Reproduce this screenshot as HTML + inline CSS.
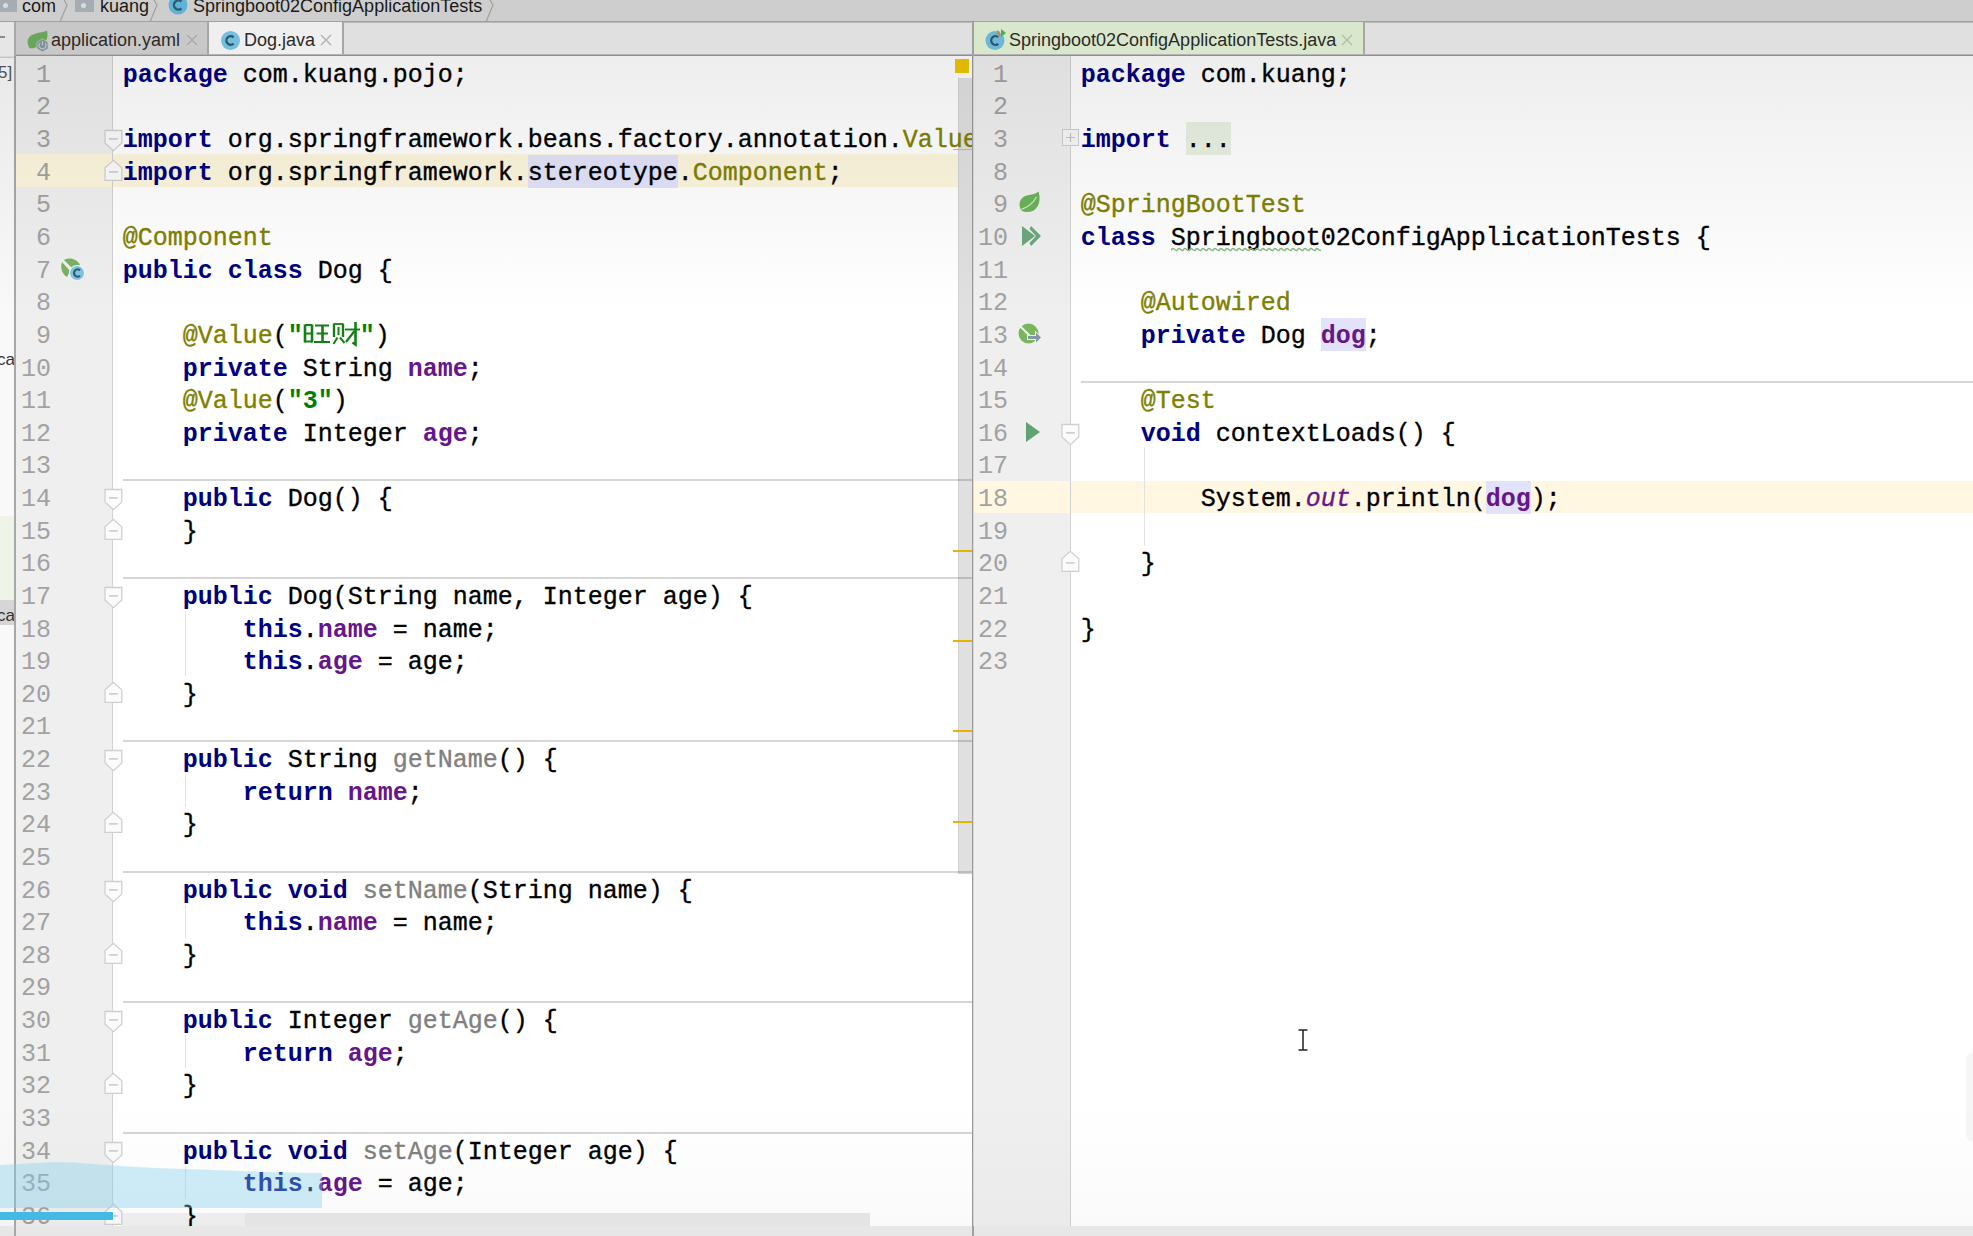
<!DOCTYPE html><html><head><meta charset="utf-8"><style>
*{margin:0;padding:0;box-sizing:border-box}
html,body{width:1973px;height:1236px;overflow:hidden;background:#fff}
body{position:relative;font-family:"Liberation Sans",sans-serif}
.abs{position:absolute}
.clip{position:absolute;overflow:hidden}
.code{position:absolute;white-space:pre;font-family:"Liberation Mono",monospace;font-size:25px;line-height:32.63px;color:#000;-webkit-text-stroke:0.35px currentColor}
.k{color:#000080;font-weight:bold;-webkit-text-stroke:0}
.a{color:#808000}
.f{color:#66168a;font-weight:bold;-webkit-text-stroke:0}
.s{color:#008000;font-weight:bold;-webkit-text-stroke:0}
.g{color:#808080}
.n{color:#000}
.i{color:#66168a;font-style:italic}
.hl{background:#e2e2fa;padding:4px 0 0}
.dots{background:#e9f1e3;padding:4px 0 0}
.ln{position:absolute;white-space:pre;font-family:"Liberation Mono",monospace;font-size:25px;line-height:32.63px;color:#a2a2a2;text-align:right}
.cjk{display:inline-block;vertical-align:-4px;width:60px;height:28px}
.sep{position:absolute;height:2px;background:#d6d6d6}
.guide{position:absolute;width:1px;background:#e2e2e2}
.ui{position:absolute;white-space:pre;font-family:"Liberation Sans",sans-serif;font-size:18px;color:#222}
.x{position:absolute;width:11px;height:11px}
.mark{position:absolute;left:953px;width:19px;height:2px;background:#e6b400}
</style></head><body>

<div class="abs" style="left:0;top:0;width:1973px;height:21px;background:#cecece"></div>
<div class="abs" style="left:0;top:21px;width:1973px;height:1px;background:#a0a0a0"></div>
<div class="abs" style="left:0;top:22px;width:1973px;height:1px;background:#b9b9b9"></div>
<div class="abs" style="left:0;top:0;width:17px;height:12px;background:#a5acb2"></div>
<div class="abs" style="left:3px;top:3px;width:5px;height:5px;border-radius:50%;background:#d8dde0"></div>
<div class="abs" style="left:75px;top:0;width:19px;height:12px;background:#a5acb2"></div>
<div class="abs" style="left:81px;top:3px;width:5px;height:5px;border-radius:50%;background:#d8dde0"></div>
<div class="ui" style="left:22px;top:-4px;color:#1a1a1a">com</div>
<div class="ui" style="left:100px;top:-4px;color:#1a1a1a">kuang</div>
<div class="ui" style="left:193px;top:-4px;color:#1a1a1a;letter-spacing:0px">Springboot02ConfigApplicationTests</div>
<svg class="abs" style="left:57px;top:0" width="14" height="22" viewBox="0 0 14 22"><path d="M6 -2 L10 5 L3 22" fill="none" stroke="#a0a0a0" stroke-width="1.2"/></svg>
<svg class="abs" style="left:147px;top:0" width="14" height="22" viewBox="0 0 14 22"><path d="M6 -2 L10 5 L3 22" fill="none" stroke="#a0a0a0" stroke-width="1.2"/></svg>
<svg class="abs" style="left:483px;top:0" width="14" height="22" viewBox="0 0 14 22"><path d="M6 -2 L10 5 L3 22" fill="none" stroke="#a0a0a0" stroke-width="1.2"/></svg>
<svg class="abs" style="left:167px;top:-6px" width="22" height="22" viewBox="0 0 22 22"><circle cx="11" cy="11" r="9.5" fill="#5fb3d6"/><path d="M14.5 7.5 A4.6 4.6 0 1 0 14.5 14.5" fill="none" stroke="#2b5d73" stroke-width="2.4"/></svg>
<div class="abs" style="left:0;top:23px;width:1973px;height:31px;background:#e0e0e0"></div>
<div class="abs" style="left:15px;top:54px;width:1958px;height:1px;background:#b4b4b4"></div>
<div class="abs" style="left:15px;top:55px;width:1958px;height:1px;background:#8f8f8f"></div>
<div class="abs" style="left:15px;top:56px;width:1958px;height:1px;background:#c4c4c4"></div>
<div class="abs" style="left:0;top:22px;width:14px;height:35px;background:#e6e6e6"></div>
<div class="abs" style="left:0;top:36px;width:5px;height:2px;background:#8a8a8a"></div>
<div class="abs" style="left:16px;top:22px;width:192px;height:32px;background:#c8c8c8"></div>
<svg class="abs" style="left:20px;top:24px" width="36" height="32" viewBox="0 0 36 32"><path d="M9.5 24 C6.5 19 7 13.5 12 11 C17 8.5 23 8.5 27 6.5 C28 10 27.5 14 26 17 L17 23 L12 24.5 Z" fill="#6aa65a"/><path d="M22.5 15 L28 18.2 L28 24.6 L22.5 27.8 L17 24.6 L17 18.2 Z" fill="#7d8e99" stroke="#b9c8b8" stroke-width="0.8"/><path d="M20 19 A3.4 3.4 0 1 0 25 19" fill="none" stroke="#b4c4cf" stroke-width="1.3"/><path d="M22.5 17 V21.5" stroke="#b4c4cf" stroke-width="1.3"/></svg>
<div class="ui" style="left:51px;top:30px;color:#2a2a2a">application.yaml</div>
<svg class="abs" style="left:186px;top:34px" width="12" height="12" viewBox="0 0 12 12"><path d="M1 1L11 11M11 1L1 11" stroke="#a8a8a8" stroke-width="1.3"/></svg>
<div class="abs" style="left:207px;top:22px;width:2px;height:32px;background:#a6a6a6"></div>
<div class="abs" style="left:209px;top:22px;width:133px;height:32px;background:#efefef"></div>
<div class="abs" style="left:342px;top:22px;width:2px;height:32px;background:#a6a6a6"></div>
<svg class="abs" style="left:220px;top:30px" width="21" height="21" viewBox="0 0 21 21"><circle cx="10.5" cy="10.5" r="9.5" fill="#74bede"/><path d="M13.6 7.3 A4.3 4.3 0 1 0 13.6 13.7" fill="none" stroke="#2d566a" stroke-width="2.3"/></svg>
<div class="ui" style="left:244px;top:30px;color:#2a2a2a">Dog.java</div>
<svg class="abs" style="left:320px;top:34px" width="12" height="12" viewBox="0 0 12 12"><path d="M1 1L11 11M11 1L1 11" stroke="#b0b0b0" stroke-width="1.3"/></svg>
<div class="abs" style="left:972px;top:22px;width:2px;height:34px;background:#a0a0a0"></div>
<div class="abs" style="left:972px;top:56px;width:1px;height:1180px;background:#9a9a9a"></div>
<div class="abs" style="left:973px;top:56px;width:1px;height:1180px;background:#d8d8d8"></div>
<div class="abs" style="left:974px;top:22px;width:389px;height:32px;background:#d9e8cd"></div>
<div class="abs" style="left:1363px;top:22px;width:2px;height:32px;background:#a6a6a6"></div>
<svg class="abs" style="left:984px;top:28px" width="24" height="24" viewBox="0 0 24 24"><circle cx="11" cy="12.5" r="9.5" fill="#6cb8d6"/><path d="M14.3 9 A4.4 4.4 0 1 0 14.3 16" fill="none" stroke="#2d566a" stroke-width="2.3"/><path d="M13 2 L16 4 L16 9 L13 8 Z" fill="#d9823f"/><path d="M17 1 L22 5 L17 9 Z" fill="#4caf50"/></svg>
<div class="ui" style="left:1009px;top:30px;color:#2a2a2a">Springboot02ConfigApplicationTests.java</div>
<svg class="abs" style="left:1341px;top:34px" width="12" height="12" viewBox="0 0 12 12"><path d="M1 1L11 11M11 1L1 11" stroke="#b0bca8" stroke-width="1.3"/></svg>
<div class="abs" style="left:0;top:57px;width:14px;height:1169px;background:#f9f9f9"></div>
<div class="abs" style="left:0;top:57px;width:14px;height:1px;background:#d2d2d2"></div>
<div class="abs" style="left:0;top:516px;width:14px;height:84px;background:#eef5e8"></div>
<div class="abs" style="left:0;top:600px;width:14px;height:25px;background:#d6d6d6"></div>
<div class="ui" style="left:-2px;top:63px;font-size:17px;color:#555">5]</div>
<div class="ui" style="left:-3px;top:350px;font-size:17px;color:#333">ca</div>
<div class="ui" style="left:-3px;top:606px;font-size:17px;color:#333">ca</div>
<div class="abs" style="left:14px;top:22px;width:2px;height:1214px;background:#a8a8a8"></div>
<div class="abs" style="left:16px;top:56px;width:97px;height:1170px;background:#efefef"></div>
<div class="abs" style="left:113px;top:56px;width:859px;height:1170px;background:#fff"></div>
<div class="abs" style="left:974px;top:56px;width:96px;height:1170px;background:#efefef"></div>
<div class="abs" style="left:1070px;top:56px;width:903px;height:1170px;background:#fff"></div>
<div class="abs" style="left:16px;top:154.39px;width:942px;height:32.63px;background:#fdf6de"></div>
<div class="abs" style="left:974px;top:480.69px;width:999px;height:32.63px;background:#fff7e2"></div>
<div class="abs" style="left:112px;top:56px;width:1px;height:1170px;background:#d2d2d2"></div>
<div class="abs" style="left:1070px;top:56px;width:1px;height:1170px;background:#d2d2d2"></div>
<div class="abs" style="left:972px;top:56px;width:1px;height:1180px;background:#9a9a9a"></div>
<div class="sep" style="left:123px;top:479px;width:849px"></div>
<div class="sep" style="left:123px;top:577px;width:849px"></div>
<div class="sep" style="left:123px;top:740px;width:849px"></div>
<div class="sep" style="left:123px;top:871px;width:849px"></div>
<div class="sep" style="left:123px;top:1001px;width:849px"></div>
<div class="sep" style="left:123px;top:1132px;width:849px"></div>
<div class="sep" style="left:1081px;top:381px;width:892px"></div>
<div class="guide" style="left:185px;top:611.21px;height:65.26px"></div>
<div class="guide" style="left:185px;top:774.36px;height:32.63px"></div>
<div class="guide" style="left:185px;top:904.88px;height:32.63px"></div>
<div class="guide" style="left:185px;top:1035.40px;height:32.63px"></div>
<div class="guide" style="left:185px;top:1165.92px;height:32.63px"></div>
<div class="guide" style="left:1144px;top:448.06px;height:97.89px"></div>
<div class="abs" style="left:958px;top:78px;width:14px;height:796px;background:rgba(0,0,0,0.12);border-left:1px solid rgba(0,0,0,0.06);border-bottom:1px solid rgba(0,0,0,0.06)"></div>
<div class="abs" style="left:955px;top:59px;width:14px;height:14px;background:#f2c400"></div>
<div class="mark" style="top:550px"></div>
<div class="mark" style="top:640px"></div>
<div class="mark" style="top:730px"></div>
<div class="mark" style="top:821px"></div>
<div class="abs" style="left:122px;top:1213px;width:748px;height:13px;background:#e8e8e8"></div>
<div class="abs" style="left:122px;top:1213px;width:123px;height:13px;background:#f1f1f1"></div>
<div class="ln" style="left:1px;width:50px;top:59.85px">1</div>
<div class="ln" style="left:1px;width:50px;top:92.48px">2</div>
<div class="ln" style="left:1px;width:50px;top:125.11px">3</div>
<div class="ln" style="left:1px;width:50px;top:157.74px">4</div>
<div class="ln" style="left:1px;width:50px;top:190.37px">5</div>
<div class="ln" style="left:1px;width:50px;top:223.00px">6</div>
<div class="ln" style="left:1px;width:50px;top:255.63px">7</div>
<div class="ln" style="left:1px;width:50px;top:288.26px">8</div>
<div class="ln" style="left:1px;width:50px;top:320.89px">9</div>
<div class="ln" style="left:1px;width:50px;top:353.52px">10</div>
<div class="ln" style="left:1px;width:50px;top:386.15px">11</div>
<div class="ln" style="left:1px;width:50px;top:418.78px">12</div>
<div class="ln" style="left:1px;width:50px;top:451.41px">13</div>
<div class="ln" style="left:1px;width:50px;top:484.04px">14</div>
<div class="ln" style="left:1px;width:50px;top:516.67px">15</div>
<div class="ln" style="left:1px;width:50px;top:549.30px">16</div>
<div class="ln" style="left:1px;width:50px;top:581.93px">17</div>
<div class="ln" style="left:1px;width:50px;top:614.56px">18</div>
<div class="ln" style="left:1px;width:50px;top:647.19px">19</div>
<div class="ln" style="left:1px;width:50px;top:679.82px">20</div>
<div class="ln" style="left:1px;width:50px;top:712.45px">21</div>
<div class="ln" style="left:1px;width:50px;top:745.08px">22</div>
<div class="ln" style="left:1px;width:50px;top:777.71px">23</div>
<div class="ln" style="left:1px;width:50px;top:810.34px">24</div>
<div class="ln" style="left:1px;width:50px;top:842.97px">25</div>
<div class="ln" style="left:1px;width:50px;top:875.60px">26</div>
<div class="ln" style="left:1px;width:50px;top:908.23px">27</div>
<div class="ln" style="left:1px;width:50px;top:940.86px">28</div>
<div class="ln" style="left:1px;width:50px;top:973.49px">29</div>
<div class="ln" style="left:1px;width:50px;top:1006.12px">30</div>
<div class="ln" style="left:1px;width:50px;top:1038.75px">31</div>
<div class="ln" style="left:1px;width:50px;top:1071.38px">32</div>
<div class="ln" style="left:1px;width:50px;top:1104.01px">33</div>
<div class="ln" style="left:1px;width:50px;top:1136.64px">34</div>
<div class="ln" style="left:1px;width:50px;top:1169.27px">35</div>
<div class="ln" style="left:1px;width:50px;top:1201.90px">36</div>
<div class="ln" style="left:958px;width:50px;top:59.85px">1</div>
<div class="ln" style="left:958px;width:50px;top:92.48px">2</div>
<div class="ln" style="left:958px;width:50px;top:125.11px">3</div>
<div class="ln" style="left:958px;width:50px;top:157.74px">8</div>
<div class="ln" style="left:958px;width:50px;top:190.37px">9</div>
<div class="ln" style="left:958px;width:50px;top:223.00px">10</div>
<div class="ln" style="left:958px;width:50px;top:255.63px">11</div>
<div class="ln" style="left:958px;width:50px;top:288.26px">12</div>
<div class="ln" style="left:958px;width:50px;top:320.89px">13</div>
<div class="ln" style="left:958px;width:50px;top:353.52px">14</div>
<div class="ln" style="left:958px;width:50px;top:386.15px">15</div>
<div class="ln" style="left:958px;width:50px;top:418.78px">16</div>
<div class="ln" style="left:958px;width:50px;top:451.41px">17</div>
<div class="ln" style="left:958px;width:50px;top:484.04px">18</div>
<div class="ln" style="left:958px;width:50px;top:516.67px">19</div>
<div class="ln" style="left:958px;width:50px;top:549.30px">20</div>
<div class="ln" style="left:958px;width:50px;top:581.93px">21</div>
<div class="ln" style="left:958px;width:50px;top:614.56px">22</div>
<div class="ln" style="left:958px;width:50px;top:647.19px">23</div>
<div class="clip" style="left:113px;top:56px;width:859px;height:1170px">
<div class="code" style="left:9.7px;top:3.85px"><span class="k">package</span><span class="n"> com.kuang.pojo;</span></div>
<div class="code" style="left:9.7px;top:69.11px"><span class="k">import</span><span class="n"> org.springframework.beans.factory.annotation.</span><span class="a">Value</span></div>
<div class="code" style="left:9.7px;top:101.74px"><span class="k">import</span><span class="n"> org.springframework.</span><span class="n hl">stereotype</span><span class="n">.</span><span class="a">Component</span><span class="n">;</span></div>
<div class="code" style="left:9.7px;top:167.00px"><span class="a">@Component</span></div>
<div class="code" style="left:9.7px;top:199.63px"><span class="k">public class</span><span class="n"> Dog {</span></div>
<div class="code" style="left:9.7px;top:264.89px"><span class="n">    </span><span class="a">@Value</span><span class="n">(</span><span class="s">&quot;</span><span style="display:inline-block;position:relative;width:57px;height:0"><svg style="position:absolute;left:0;top:-22px" width="58" height="26" viewBox="0 0 58 26"><g fill="none" stroke="#138013" stroke-linecap="butt"><path d="M2 3.5V21.5M9 3.5V21.5" stroke-width="2.6"/><path d="M2 4H9M2 12.5H9M2 20.5H9" stroke-width="1.8"/><path d="M12 4.5H26M13.5 12.5H25M11 21H27" stroke-width="1.9"/><path d="M19.5 4.5V21" stroke-width="2.6"/><path d="M31 2.5V16M40 2.5V16" stroke-width="2.4"/><path d="M31 3H40" stroke-width="1.8"/><path d="M35.5 6V14" stroke-width="2"/><path d="M34.5 16.5L30.5 23M37 16.5L41.5 22" stroke-width="2"/><path d="M42 8.5H57" stroke-width="1.9"/><path d="M52.5 1V23.5L49.5 21.5" stroke-width="2.6"/><path d="M51.5 10L43 21" stroke-width="2.2"/></g></svg></span><span class="s">&quot;</span><span class="n">)</span></div>
<div class="code" style="left:9.7px;top:297.52px"><span class="n">    </span><span class="k">private</span><span class="n"> String </span><span class="f">name</span><span class="n">;</span></div>
<div class="code" style="left:9.7px;top:330.15px"><span class="n">    </span><span class="a">@Value</span><span class="n">(</span><span class="s">&quot;3&quot;</span><span class="n">)</span></div>
<div class="code" style="left:9.7px;top:362.78px"><span class="n">    </span><span class="k">private</span><span class="n"> Integer </span><span class="f">age</span><span class="n">;</span></div>
<div class="code" style="left:9.7px;top:428.04px"><span class="n">    </span><span class="k">public</span><span class="n"> Dog() {</span></div>
<div class="code" style="left:9.7px;top:460.67px"><span class="n">    }</span></div>
<div class="code" style="left:9.7px;top:525.93px"><span class="n">    </span><span class="k">public</span><span class="n"> Dog(String name, Integer age) {</span></div>
<div class="code" style="left:9.7px;top:558.56px"><span class="n">        </span><span class="k">this</span><span class="n">.</span><span class="f">name</span><span class="n"> = name;</span></div>
<div class="code" style="left:9.7px;top:591.19px"><span class="n">        </span><span class="k">this</span><span class="n">.</span><span class="f">age</span><span class="n"> = age;</span></div>
<div class="code" style="left:9.7px;top:623.82px"><span class="n">    }</span></div>
<div class="code" style="left:9.7px;top:689.08px"><span class="n">    </span><span class="k">public</span><span class="n"> String </span><span class="g">getName</span><span class="n">() {</span></div>
<div class="code" style="left:9.7px;top:721.71px"><span class="n">        </span><span class="k">return</span><span class="n"> </span><span class="f">name</span><span class="n">;</span></div>
<div class="code" style="left:9.7px;top:754.34px"><span class="n">    }</span></div>
<div class="code" style="left:9.7px;top:819.60px"><span class="n">    </span><span class="k">public void</span><span class="n"> </span><span class="g">setName</span><span class="n">(String name) {</span></div>
<div class="code" style="left:9.7px;top:852.23px"><span class="n">        </span><span class="k">this</span><span class="n">.</span><span class="f">name</span><span class="n"> = name;</span></div>
<div class="code" style="left:9.7px;top:884.86px"><span class="n">    }</span></div>
<div class="code" style="left:9.7px;top:950.12px"><span class="n">    </span><span class="k">public</span><span class="n"> Integer </span><span class="g">getAge</span><span class="n">() {</span></div>
<div class="code" style="left:9.7px;top:982.75px"><span class="n">        </span><span class="k">return</span><span class="n"> </span><span class="f">age</span><span class="n">;</span></div>
<div class="code" style="left:9.7px;top:1015.38px"><span class="n">    }</span></div>
<div class="code" style="left:9.7px;top:1080.64px"><span class="n">    </span><span class="k">public void</span><span class="n"> </span><span class="g">setAge</span><span class="n">(Integer age) {</span></div>
<div class="code" style="left:9.7px;top:1113.27px"><span class="n">        </span><span class="k">this</span><span class="n">.</span><span class="f">age</span><span class="n"> = age;</span></div>
<div class="code" style="left:9.7px;top:1145.90px"><span class="n">    }</span></div>
</div>
<div class="clip" style="left:1071px;top:56px;width:902px;height:1170px">
<div class="code" style="left:9.7px;top:3.85px"><span class="k">package</span><span class="n"> com.kuang;</span></div>
<div class="code" style="left:9.7px;top:69.11px"><span class="k">import</span><span class="n"> </span><span class="n dots">...</span></div>
<div class="code" style="left:9.7px;top:134.37px"><span class="a">@SpringBootTest</span></div>
<div class="code" style="left:9.7px;top:167.00px"><span class="k">class</span><span class="n"> Springboot02ConfigApplicationTests {</span></div>
<div class="code" style="left:9.7px;top:232.26px"><span class="n">    </span><span class="a">@Autowired</span></div>
<div class="code" style="left:9.7px;top:264.89px"><span class="n">    </span><span class="k">private</span><span class="n"> Dog </span><span class="f hl">dog</span><span class="n">;</span></div>
<div class="code" style="left:9.7px;top:330.15px"><span class="n">    </span><span class="a">@Test</span></div>
<div class="code" style="left:9.7px;top:362.78px"><span class="n">    </span><span class="k">void</span><span class="n"> contextLoads() {</span></div>
<div class="code" style="left:9.7px;top:428.04px"><span class="n">        System.</span><span class="i">out</span><span class="n">.println(</span><span class="f hl">dog</span><span class="n">);</span></div>
<div class="code" style="left:9.7px;top:493.30px"><span class="n">    }</span></div>
<div class="code" style="left:9.7px;top:558.56px"><span class="n">}</span></div>
</div>
<svg class="abs" style="left:1171px;top:246.65px" width="150" height="5" viewBox="0 0 150 5"><path d="M0 3.5 Q1.5 0.5 3 2 T6 3.5 Q7.5 0.5 9 2 T12 3.5 Q13.5 0.5 15 2 T18 3.5 Q19.5 0.5 21 2 T24 3.5 Q25.5 0.5 27 2 T30 3.5 Q31.5 0.5 33 2 T36 3.5 Q37.5 0.5 39 2 T42 3.5 Q43.5 0.5 45 2 T48 3.5 Q49.5 0.5 51 2 T54 3.5 Q55.5 0.5 57 2 T60 3.5 Q61.5 0.5 63 2 T66 3.5 Q67.5 0.5 69 2 T72 3.5 Q73.5 0.5 75 2 T78 3.5 Q79.5 0.5 81 2 T84 3.5 Q85.5 0.5 87 2 T90 3.5 Q91.5 0.5 93 2 T96 3.5 Q97.5 0.5 99 2 T102 3.5 Q103.5 0.5 105 2 T108 3.5 Q109.5 0.5 111 2 T114 3.5 Q115.5 0.5 117 2 T120 3.5 Q121.5 0.5 123 2 T126 3.5 Q127.5 0.5 129 2 T132 3.5 Q133.5 0.5 135 2 T138 3.5 Q139.5 0.5 141 2 T144 3.5 Q145.5 0.5 147 2 T150 3.5" fill="none" stroke="#86b986" stroke-width="1.4"/></svg>
<div class="abs" style="left:953px;top:148.76px;width:19px;height:1px;background:#b9b0e6"></div>
<svg class="abs" style="left:103.5px;top:129.08px" width="19" height="24" viewBox="0 0 19 24"><path d="M1 1.5 H17.8 V14 L9.4 21.7 L1 14 Z" fill="#fbfbfb" stroke="#d0d0d0" stroke-width="1.3"/><path d="M5 9.9 H13.8" stroke="#c6c6c6" stroke-width="1.4"/></svg>
<svg class="abs" style="left:103.5px;top:158.71px" width="19" height="24" viewBox="0 0 19 24"><path d="M1 21.3 H17.8 V8.7 L9.4 1.3 L1 8.7 Z" fill="#fbfbfb" stroke="#d0d0d0" stroke-width="1.3"/><path d="M5 12.9 H13.8" stroke="#c6c6c6" stroke-width="1.4"/></svg>
<svg class="abs" style="left:103.5px;top:488.01px" width="19" height="24" viewBox="0 0 19 24"><path d="M1 1.5 H17.8 V14 L9.4 21.7 L1 14 Z" fill="#fbfbfb" stroke="#d0d0d0" stroke-width="1.3"/><path d="M5 9.9 H13.8" stroke="#c6c6c6" stroke-width="1.4"/></svg>
<svg class="abs" style="left:103.5px;top:517.64px" width="19" height="24" viewBox="0 0 19 24"><path d="M1 21.3 H17.8 V8.7 L9.4 1.3 L1 8.7 Z" fill="#fbfbfb" stroke="#d0d0d0" stroke-width="1.3"/><path d="M5 12.9 H13.8" stroke="#c6c6c6" stroke-width="1.4"/></svg>
<svg class="abs" style="left:103.5px;top:585.90px" width="19" height="24" viewBox="0 0 19 24"><path d="M1 1.5 H17.8 V14 L9.4 21.7 L1 14 Z" fill="#fbfbfb" stroke="#d0d0d0" stroke-width="1.3"/><path d="M5 9.9 H13.8" stroke="#c6c6c6" stroke-width="1.4"/></svg>
<svg class="abs" style="left:103.5px;top:680.79px" width="19" height="24" viewBox="0 0 19 24"><path d="M1 21.3 H17.8 V8.7 L9.4 1.3 L1 8.7 Z" fill="#fbfbfb" stroke="#d0d0d0" stroke-width="1.3"/><path d="M5 12.9 H13.8" stroke="#c6c6c6" stroke-width="1.4"/></svg>
<svg class="abs" style="left:103.5px;top:749.05px" width="19" height="24" viewBox="0 0 19 24"><path d="M1 1.5 H17.8 V14 L9.4 21.7 L1 14 Z" fill="#fbfbfb" stroke="#d0d0d0" stroke-width="1.3"/><path d="M5 9.9 H13.8" stroke="#c6c6c6" stroke-width="1.4"/></svg>
<svg class="abs" style="left:103.5px;top:811.31px" width="19" height="24" viewBox="0 0 19 24"><path d="M1 21.3 H17.8 V8.7 L9.4 1.3 L1 8.7 Z" fill="#fbfbfb" stroke="#d0d0d0" stroke-width="1.3"/><path d="M5 12.9 H13.8" stroke="#c6c6c6" stroke-width="1.4"/></svg>
<svg class="abs" style="left:103.5px;top:879.57px" width="19" height="24" viewBox="0 0 19 24"><path d="M1 1.5 H17.8 V14 L9.4 21.7 L1 14 Z" fill="#fbfbfb" stroke="#d0d0d0" stroke-width="1.3"/><path d="M5 9.9 H13.8" stroke="#c6c6c6" stroke-width="1.4"/></svg>
<svg class="abs" style="left:103.5px;top:941.83px" width="19" height="24" viewBox="0 0 19 24"><path d="M1 21.3 H17.8 V8.7 L9.4 1.3 L1 8.7 Z" fill="#fbfbfb" stroke="#d0d0d0" stroke-width="1.3"/><path d="M5 12.9 H13.8" stroke="#c6c6c6" stroke-width="1.4"/></svg>
<svg class="abs" style="left:103.5px;top:1010.09px" width="19" height="24" viewBox="0 0 19 24"><path d="M1 1.5 H17.8 V14 L9.4 21.7 L1 14 Z" fill="#fbfbfb" stroke="#d0d0d0" stroke-width="1.3"/><path d="M5 9.9 H13.8" stroke="#c6c6c6" stroke-width="1.4"/></svg>
<svg class="abs" style="left:103.5px;top:1072.35px" width="19" height="24" viewBox="0 0 19 24"><path d="M1 21.3 H17.8 V8.7 L9.4 1.3 L1 8.7 Z" fill="#fbfbfb" stroke="#d0d0d0" stroke-width="1.3"/><path d="M5 12.9 H13.8" stroke="#c6c6c6" stroke-width="1.4"/></svg>
<svg class="abs" style="left:103.5px;top:1140.61px" width="19" height="24" viewBox="0 0 19 24"><path d="M1 1.5 H17.8 V14 L9.4 21.7 L1 14 Z" fill="#fbfbfb" stroke="#d0d0d0" stroke-width="1.3"/><path d="M5 9.9 H13.8" stroke="#c6c6c6" stroke-width="1.4"/></svg>
<svg class="abs" style="left:103.5px;top:1202.87px" width="19" height="24" viewBox="0 0 19 24"><path d="M1 21.3 H17.8 V8.7 L9.4 1.3 L1 8.7 Z" fill="#fbfbfb" stroke="#d0d0d0" stroke-width="1.3"/><path d="M5 12.9 H13.8" stroke="#c6c6c6" stroke-width="1.4"/></svg>
<svg class="abs" style="left:1061.1px;top:422.75px" width="19" height="24" viewBox="0 0 19 24"><path d="M1 1.5 H17.8 V14 L9.4 21.7 L1 14 Z" fill="#fbfbfb" stroke="#d0d0d0" stroke-width="1.3"/><path d="M5 9.9 H13.8" stroke="#c6c6c6" stroke-width="1.4"/></svg>
<svg class="abs" style="left:1061.1px;top:550.27px" width="19" height="24" viewBox="0 0 19 24"><path d="M1 21.3 H17.8 V8.7 L9.4 1.3 L1 8.7 Z" fill="#fbfbfb" stroke="#d0d0d0" stroke-width="1.3"/><path d="M5 12.9 H13.8" stroke="#c6c6c6" stroke-width="1.4"/></svg>
<svg class="abs" style="left:1062px;top:129.08px" width="18" height="18" viewBox="0 0 18 18"><rect x="0.5" y="0.5" width="16" height="16" fill="#f7f7f7" stroke="#cdcdcd"/><path d="M4 8.5H13M8.5 4V13" stroke="#c4c4c4" stroke-width="1.2"/></svg>
<svg class="abs" style="left:58px;top:256.60px" width="28" height="28" viewBox="0 0 28 28"><path d="M4 5 C2 11 4 17 9 20 L12 14 Z" fill="#7bb162"/><path d="M6 3 C12 0 19 2 22 8 L14 11 Z" fill="#7bb162"/><circle cx="19" cy="16" r="8" fill="#eef6ff"/><circle cx="19" cy="16" r="7" fill="#82c3e3"/><path d="M22 13.3 A3.6 3.6 0 1 0 22 18.7" fill="none" stroke="#2f5e75" stroke-width="2.2"/></svg>
<svg class="abs" style="left:1017px;top:191.34px" width="24" height="24" viewBox="0 0 24 24"><path d="M5 20 C0 14 3 6 10 4.5 C15 3.5 19 3 21.5 0.5 C23.5 7 23 14 18 18.5 C14 21.5 9 21.5 5 20 Z" fill="#6cb25a"/><path d="M4.5 18.5 C10 16 15 14 19.5 6" fill="none" stroke="#c4ecb8" stroke-width="1.3"/></svg>
<svg class="abs" style="left:1021px;top:224.97px" width="22" height="22" viewBox="0 0 22 22"><path d="M1 1 L14 11 L1 21 Z" fill="#6aa67c"/><path d="M10 1 L20 11 L10 21 L8.5 18 L15 11 L8.5 4 Z" fill="#6aa67c"/></svg>
<svg class="abs" style="left:1017px;top:322.86px" width="26" height="26" viewBox="0 0 26 26"><circle cx="11.5" cy="10.5" r="10" fill="#79b55e"/><path d="M3 3 L14 14" stroke="#eef5ea" stroke-width="2"/><path d="M10 12 H18 V7.5 L25 14.5 L18 21.5 V17 H10 Z" fill="#eef2f4"/><path d="M11 13 H19 V9.5 L24 14.5 L19 19.5 V16 H11 Z" fill="#8796a3"/></svg>
<svg class="abs" style="left:1025px;top:420.75px" width="16" height="22" viewBox="0 0 16 22"><path d="M1 1 L15 11 L1 21 Z" fill="#5fa371"/></svg>
<div class="abs" style="left:0;top:1226px;width:1973px;height:10px;background:#e7e7e7"></div>
<div class="abs" style="left:14px;top:1226px;width:2px;height:10px;background:#a8a8a8"></div>
<div class="abs" style="left:972px;top:1226px;width:2px;height:10px;background:#a0a0a0"></div>
<div class="abs" style="left:0;top:56px;width:1973px;height:260px;background:linear-gradient(rgba(0,0,0,0.065),rgba(0,0,0,0))"></div>
<div class="abs" style="left:0;top:1100px;width:1973px;height:126px;background:linear-gradient(rgba(0,0,0,0),rgba(0,0,0,0.02))"></div>
<svg class="abs" style="left:0;top:1160px" width="330" height="52" viewBox="0 0 330 52"><path d="M0 5 C30 4 50 1 80 3 C110 5 140 8 185 9 C220 10 250 12 322 13 L322 48 L0 48 Z" fill="rgba(125,208,240,0.38)"/></svg>
<div class="abs" style="left:0;top:1212px;width:113px;height:8px;background:#45b9e6"></div>
<div class="abs" style="left:1966px;top:1052px;width:10px;height:90px;border-radius:8px 0 0 8px;background:rgba(0,0,0,0.035)"></div>
<svg class="abs" style="left:1296px;top:1027px" width="14" height="26" viewBox="0 0 14 26"><path d="M2.5 3H6.5Q7 3 7 4V22Q7 23 6.5 23H2.5M11.5 3H7.5Q7 3 7 4M7 22Q7 23 7.5 23H11.5" stroke="#222" stroke-width="1.5" fill="none"/></svg>
</body></html>
